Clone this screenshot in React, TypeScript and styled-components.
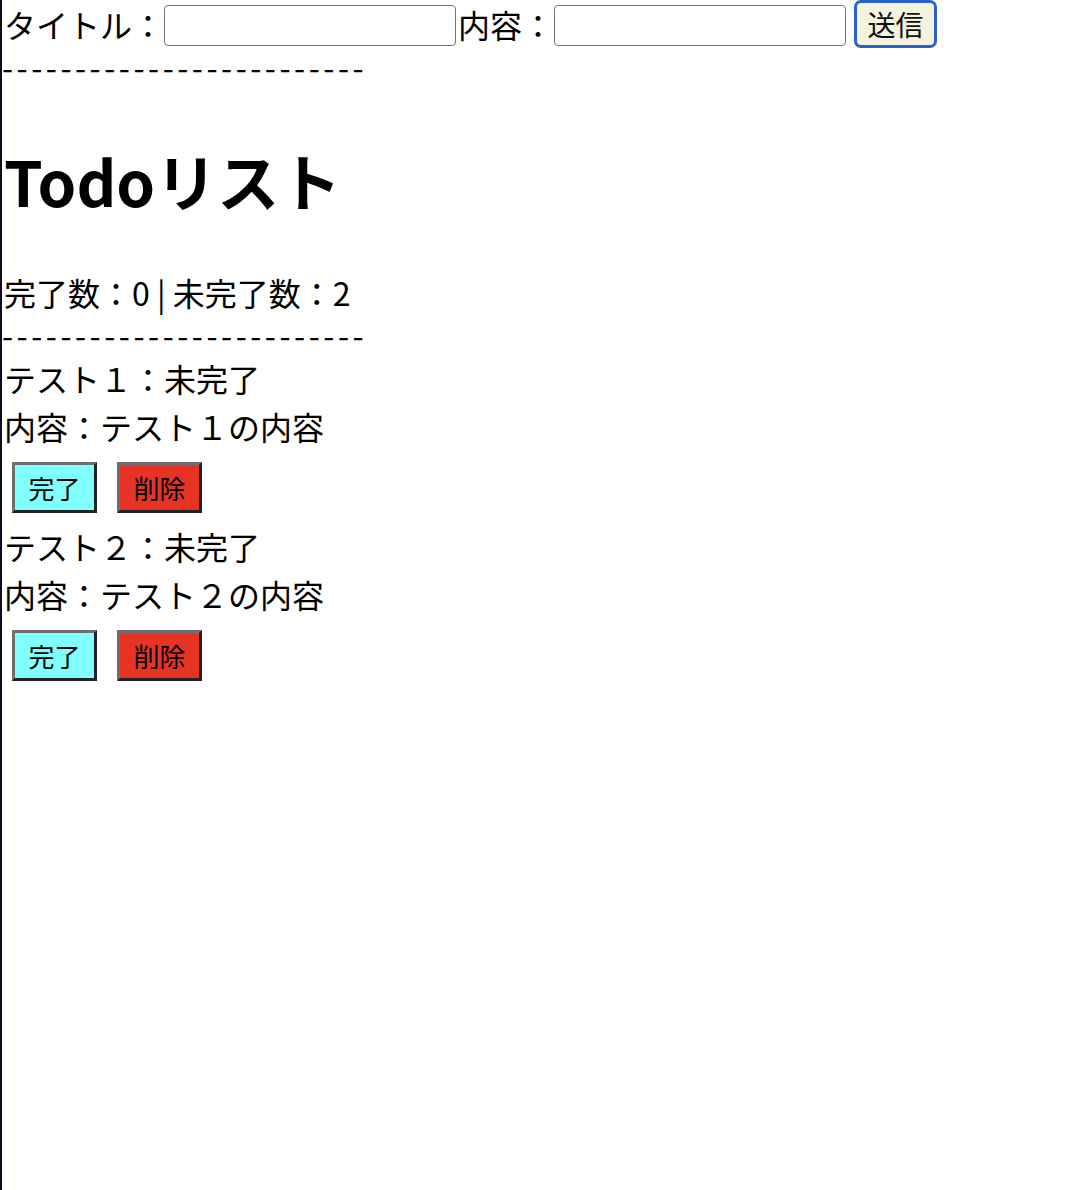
import React from "react";
import styled, { createGlobalStyle } from "styled-components";

const Global = createGlobalStyle`
  html, body { margin: 0; padding: 0; background: #ffffff; }
  body {
    font-family: "Noto Sans CJK JP", "Noto Sans", sans-serif;
    font-size: 32px;
    line-height: 48px;
    color: #000;
  }
`;

const Page = styled.div`
  min-height: 1190px;
  border-left: 2px solid #120b22;
  box-sizing: border-box;
`;

const FormRow = styled.div`
  display: flex;
  align-items: center;
  height: 48px;
`;

const Label = styled.span`
  font-size: 32px;
  white-space: nowrap;
  padding-left: 2px;
`;

const TextInput = styled.input`
  width: 292px;
  height: 41px;
  box-sizing: border-box;
  border: 1px solid #767676;
  border-radius: 4px;
  margin: 3px 0 0 0;
  padding: 0 6px;
  font-size: 26px;
  background: #fff;
`;

const SendButton = styled.button`
  margin-left: 8px;
  width: 83px;
  height: 48px;
  box-sizing: border-box;
  border: 3px solid #2a62c9;
  border-radius: 7px;
  background: #f4f3e0;
  font-family: inherit;
  font-size: 28px;
  color: #111;
  padding: 0;
  line-height: 1;
`;

const Divider = styled.div<{ $after: number }>`
  line-height: 36px;
  padding-bottom: ${(p) => p.$after}px;
  letter-spacing: 3.5px;
  white-space: nowrap;
`;

const Title = styled.h1`
  font-size: 62px;
  font-weight: 700;
  line-height: 96px;
  margin: 36px 0 40px;
  padding-left: 2px;
`;

const Summary = styled.p`
  margin: 0;
  height: 48px;
  font-size: 32px;
  padding-left: 2px;
`;

const Item = styled.div``;

const ItemLine = styled.div`
  padding-left: 2px;
  height: 48px;
`;

const Actions = styled.div`
  display: flex;
  gap: 20px;
  padding: 12px 10px 9px;
`;

const ActionButton = styled.button<{ $tone: "done" | "delete" }>`
  width: 85px;
  height: 51px;
  box-sizing: border-box;
  border-style: solid;
  border-width: 3px;
  border-color: #6e6e6e #222222 #222222 #6e6e6e;
  background: ${(p) => (p.$tone === "done" ? "#7ffffe" : "#e83224")};
  font-family: inherit;
  font-size: 26px;
  color: #000;
  padding: 0;
  line-height: 1;
`;

const todos = [
  { title: "テスト１", body: "テスト１の内容" },
  { title: "テスト２", body: "テスト２の内容" },
];

export default function App() {
  const dashes = "-------------------------";
  return (
    <>
      <Global />
      <Page>
        <FormRow>
          <Label>タイトル：</Label>
          <TextInput type="text" />
          <Label>内容：</Label>
          <TextInput type="text" />
          <SendButton>送信</SendButton>
        </FormRow>
        <Divider $after={12}>{dashes}</Divider>
        <Title>Todoリスト</Title>
        <Summary>完了数：0 | 未完了数：2</Summary>
        <Divider $after={2}>{dashes}</Divider>
        {todos.map((t) => (
          <Item key={t.title}>
            <ItemLine>{t.title}：未完了</ItemLine>
            <ItemLine>内容：{t.body}</ItemLine>
            <Actions>
              <ActionButton $tone="done">完了</ActionButton>
              <ActionButton $tone="delete">削除</ActionButton>
            </Actions>
          </Item>
        ))}
      </Page>
    </>
  );
}
